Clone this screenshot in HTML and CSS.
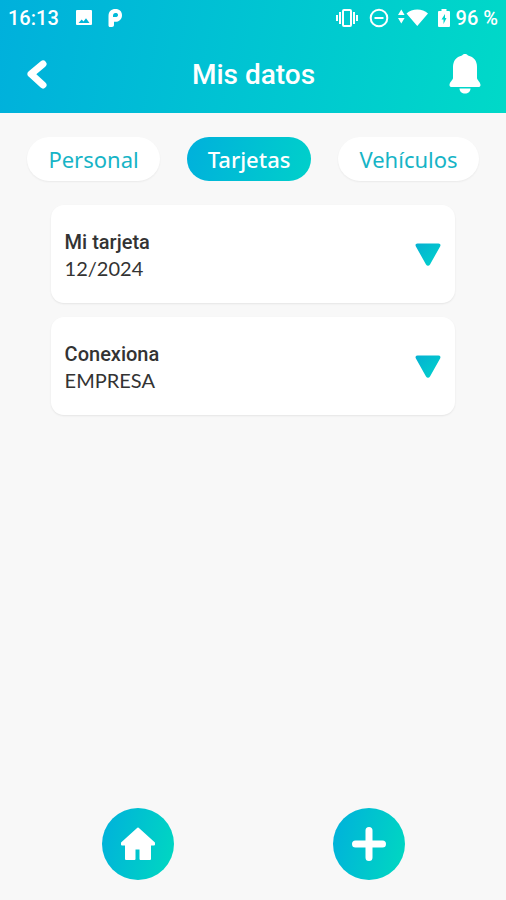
FILE: index.html
```html
<!DOCTYPE html>
<html lang="es">
<head>
<meta charset="utf-8">
<meta name="viewport" content="width=device-width, initial-scale=1">
<title>Mis datos</title>
<link rel="stylesheet" href="styles.css">
</head>
<body>
<header class="header">
  <div class="status">
    <div class="status-left">
      <span>16:13</span>
      <svg class="i-photo" width="18" height="18" viewBox="0 0 18 18" aria-hidden="true"><path fill="#fff" fill-rule="evenodd" d="M2 1h14a1 1 0 0 1 1 1v13a1 1 0 0 1-1 1H2a1 1 0 0 1-1-1V2a1 1 0 0 1 1-1ZM3.500 14h11l-3.500-4.800-2.500 3.200-1.800-2Z"/></svg>
      <svg class="i-app" width="16" height="20" viewBox="0 0 16 20" aria-hidden="true"><path fill="#fff" fill-rule="evenodd" d="M1.500 8C1.500 3.500 4.300 1 8.500 1 12.500 1 15 3.500 15 7.200c0 4-2.800 6.600-6.800 6.600H7V17c0 1.300-.8 2-2 2H3c-1 0-1.500-.6-1.500-1.500ZM8.500 5C6.800 5 6 6.200 6 7.800V9h2.500c1.500 0 2.500-.8 2.500-2.100S10 5 8.500 5Z"/></svg>
    </div>
    <div class="status-right">
      <svg class="i-vibrate" width="24" height="18" viewBox="0 0 24 18" aria-hidden="true"><g fill="none" stroke="#fff" stroke-width="2"><rect x="8" y="1" width="8" height="16" rx="1"/><path d="M5 3v12M19 3v12M2 6v6M22 6v6"/></g></svg>
      <svg class="i-dnd" width="20" height="20" viewBox="0 0 20 20" aria-hidden="true"><g fill="none" stroke="#fff" stroke-width="2"><circle cx="10" cy="10" r="8.300"/><path d="M5.500 10h9"/></g></svg>
      <svg class="i-wifi" width="30" height="18" viewBox="0 0 30 18" aria-hidden="true"><g fill="#fff"><path d="M0 6l3.300-5.500L6.600 6ZM0 9h6.600l-3.300 5.500ZM8.500 4.500C14-1 24.500-1 30 4.500L19.250 17Z"/></g></svg>
      <svg class="i-battery" width="12" height="20" viewBox="0 0 12 20" aria-hidden="true"><path fill="#fff" fill-rule="evenodd" d="M3.500 1h5v2H11a1 1 0 0 1 1 1v14a1 1 0 0 1-1 1H1a1 1 0 0 1-1-1V4a1 1 0 0 1 1-1h2.500ZM7 6 3.500 11.500h2V16L8.500 10H7Z"/></svg>
      <span>96 %</span>
    </div>
  </div>
  <div class="titlebar">
    <button class="icon-btn" type="button" aria-label="Volver"><svg width="22" height="30" viewBox="0 0 22 30" aria-hidden="true"><path fill="none" stroke="#fff" stroke-width="7" stroke-linecap="round" stroke-linejoin="round" d="M17 4 5 14l12 11"/></svg></button>
    <h1 class="title">Mis datos</h1>
    <button class="icon-btn" type="button" aria-label="Notificaciones"><svg width="32" height="42" viewBox="0 0 32 42" aria-hidden="true"><g fill="#fff"><path d="M16 0c1.500 0 2.500.6 3 1.500C25 3 28 7 28 13v11c0 2 3.500 4 3.500 7 0 1.500-1 2-2 2h-27c-1 0-2-.5-2-2 0-3 3.500-5 3.500-7V13C4 7 7 3 13 1.500 13.500.6 14.500 0 16 0Z"/><path d="M10.500 34.500h11c0 3-2.500 5-5.500 5s-5.500-2-5.500-5Z"/></g></svg></button>
  </div>
</header>
<nav class="tabs" aria-label="Secciones">
  <button class="tab" type="button">Personal</button>
  <button class="tab active" type="button" aria-current="page">Tarjetas</button>
  <button class="tab" type="button">Vehículos</button>
</nav>
<main class="cards">
  <article class="card">
    <div><h2 class="card-title">Mi tarjeta</h2><p class="card-text">12/2024</p></div>
    <button class="icon-btn" type="button" aria-label="Desplegar Mi tarjeta"><svg width="26" height="24" viewBox="0 0 26 24" aria-hidden="true"><defs><linearGradient id="accent" x1="0" y1="0" x2="1" y2="1"><stop offset="0" stop-color="#05b0d2"/><stop offset="1" stop-color="#00d4cb"/></linearGradient></defs><path fill="url(#accent)" d="M2.500.5h21c1.800 0 2.500 1.600 1.600 3L15 21.500c-1.100 1.800-2.900 1.800-4 0L.9 3.500C0 2.100.7.5 2.500.5Z"/></svg></button>
  </article>
  <article class="card">
    <div><h2 class="card-title">Conexiona</h2><p class="card-text">EMPRESA</p></div>
    <button class="icon-btn" type="button" aria-label="Desplegar Conexiona"><svg width="26" height="24" viewBox="0 0 26 24" aria-hidden="true"><path fill="url(#accent)" d="M2.500.5h21c1.800 0 2.500 1.600 1.600 3L15 21.500c-1.100 1.800-2.900 1.800-4 0L.9 3.500C0 2.100.7.5 2.500.5Z"/></svg></button>
  </article>
</main>
<footer class="actions">
  <button class="round" type="button" aria-label="Inicio"><svg width="36" height="36" viewBox="0 0 36 36" aria-hidden="true"><path fill="#fff" stroke="#fff" stroke-width="2" stroke-linejoin="round" d="M18 2.500 2 17v1.500h4V33h8.500V22.500h6V33H30V18.500h4V17Z"/></svg></button>
  <button class="round" type="button" aria-label="Añadir"><svg width="36" height="36" viewBox="0 0 36 36" aria-hidden="true"><path fill="none" stroke="#fff" stroke-width="7" stroke-linecap="round" d="M18 4.500v27M4.500 18h27"/></svg></button>
</footer>
</body>
</html>
```
FILE: styles.css
```css
* { box-sizing: border-box; }
body {
  margin: 0;
  min-height: 100vh;
  display: flex;
  flex-direction: column;
  background: #f8f8f8;
  color: #333;
  font-family: Roboto, "Liberation Sans", sans-serif;
}
h1, h2, p { margin: 0; }
svg { display: block; flex: none; }
button { border: 0; cursor: pointer; }
.header {
  background: linear-gradient(100deg, #00b0dc, #00d9c8);
  color: #fff;
}
.status {
  display: flex;
  justify-content: space-between;
  align-items: center;
  height: 36px;
  padding: 0 8px;
  font-size: 20px;
  font-weight: 500;
}
.status-left, .status-right { display: flex; align-items: center; }
.i-photo { margin-left: 16px; }
.i-app { margin-left: 14px; }
.i-dnd { margin-left: 10px; }
.i-wifi { margin-left: 9px; }
.i-battery { margin: 0 6px 0 10px; }
.titlebar {
  display: grid;
  grid-template-columns: 1fr auto 1fr;
  align-items: center;
  height: 77px;
  padding: 0 25px 0 26px;
}
.titlebar .icon-btn:last-child { justify-self: end; }
.icon-btn { justify-self: start; padding: 0; background: none; }
.title { font-size: 28px; line-height: 32px; font-weight: 500; }
.tabs {
  display: flex;
  justify-content: center;
  gap: 27px;
  padding: 24px 16px;
}
.tab {
  height: 44px;
  padding: 0 21px;
  border-radius: 22px;
  background: #fff;
  color: #16b4c6;
  font-family: "Noto Sans", "Open Sans", sans-serif;
  font-size: 22px;
  box-shadow: 0 1px 2px rgb(0 0 0 / 6%);
}
.tab.active {
  background: linear-gradient(105deg, #00b0dc, #00d0ca);
  color: #fff;
  font-weight: 500;
  box-shadow: none;
}
.cards {
  flex: 1;
  display: flex;
  flex-direction: column;
  gap: 14px;
  width: 80%;
  margin: 0 auto;
}
.card {
  display: flex;
  justify-content: space-between;
  align-items: center;
  padding: 24px 14px 22px;
  border-radius: 13px;
  background: #fff;
  box-shadow: 0 1px 2px rgb(0 0 0 / 8%);
}
.card-title { font-size: 20px; line-height: 26px; font-weight: 500; }
.card-text {
  font-family: Lato, "Open Sans", sans-serif;
  font-size: 20px;
  line-height: 26px;
}
.actions {
  display: grid;
  grid-template-columns: 1fr 1fr;
  justify-items: center;
  padding: 20px 22px;
}
.round {
  display: grid;
  place-items: center;
  width: 72px;
  height: 72px;
  padding: 0;
  border-radius: 50%;
  background: linear-gradient(105deg, #00b0dc, #00d9c0);
}
```
